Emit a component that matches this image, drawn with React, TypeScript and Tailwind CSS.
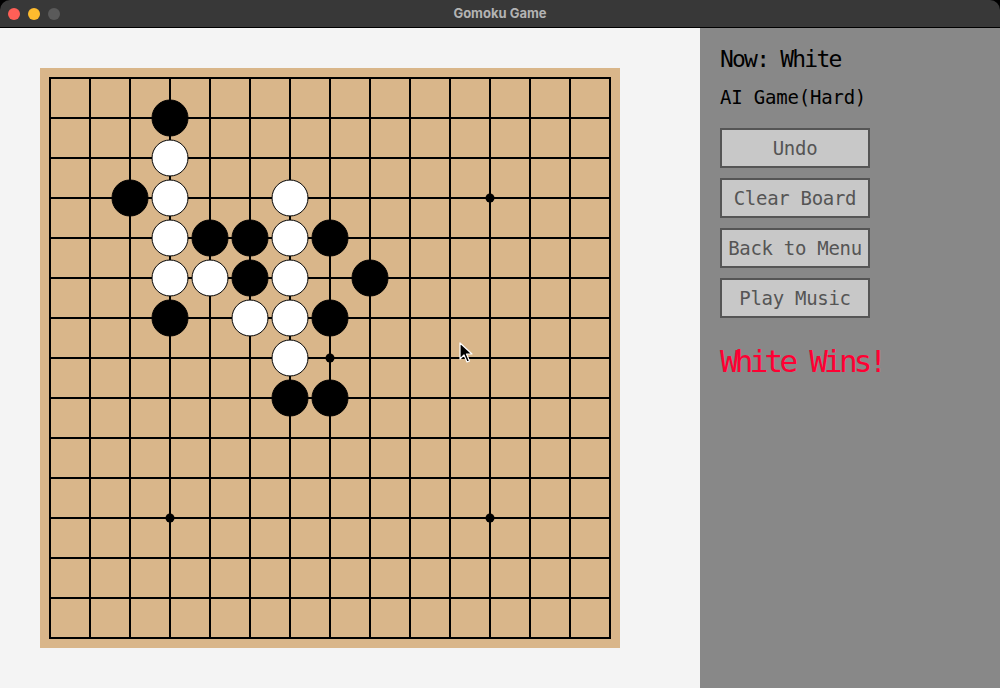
import React from "react";

// board: 15x15 intersections, 40px apart
const SIZE = 15;
const GAP = 40;
const OFF = 10;

type Stone = [number, number, "b" | "w"];

const stones: Stone[] = [
  [3, 1, "b"],
  [3, 2, "w"],
  [2, 3, "b"],
  [3, 3, "w"],
  [6, 3, "w"],
  [3, 4, "w"],
  [4, 4, "b"],
  [5, 4, "b"],
  [6, 4, "w"],
  [7, 4, "b"],
  [3, 5, "w"],
  [4, 5, "w"],
  [5, 5, "b"],
  [6, 5, "w"],
  [8, 5, "b"],
  [3, 6, "b"],
  [5, 6, "w"],
  [6, 6, "w"],
  [7, 6, "b"],
  [6, 7, "w"],
  [6, 8, "b"],
  [7, 8, "b"],
];

const starPoints = [
  [3, 3],
  [11, 3],
  [7, 7],
  [3, 11],
  [11, 11],
];

const buttons = ["Undo", "Clear Board", "Back to Menu", "Play Music"];

const mono = { fontFamily: '"DejaVu Sans Mono", "Liberation Mono", monospace' };

const Board = () => {
  const end = OFF + GAP * (SIZE - 1);
  return (
    <div className="w-[580px] h-[580px] bg-[#d9b68a]">
      <svg width="580" height="580" viewBox="0 0 580 580">
        {Array.from({ length: SIZE }).map((_, i) => (
          <g key={i}>
            <line x1={OFF + i * GAP} y1={OFF - 1} x2={OFF + i * GAP} y2={end + 1} stroke="#000" strokeWidth="2" />
            <line x1={OFF - 1} y1={OFF + i * GAP} x2={end + 1} y2={OFF + i * GAP} stroke="#000" strokeWidth="2" />
          </g>
        ))}
        {starPoints.map(([x, y]) => (
          <circle key={`s${x}-${y}`} cx={OFF + x * GAP} cy={OFF + y * GAP} r="4.5" fill="#000" />
        ))}
        {stones.map(([x, y, c]) => (
          <circle
            key={`${x}-${y}`}
            cx={OFF + x * GAP}
            cy={OFF + y * GAP}
            r="18"
            fill={c === "b" ? "#000" : "#fff"}
            stroke="#000"
            strokeWidth="1"
          />
        ))}
      </svg>
    </div>
  );
};

const App = () => {
  return (
    <div className="w-[1000px] h-[688px] bg-black overflow-hidden flex flex-col">
      {/* title bar */}
      <div className="relative h-[28px] shrink-0 bg-[#383838] border-b border-black rounded-t-[10px] flex items-center justify-center">
        <div className="absolute left-[8px] top-[8px] flex gap-[8px]">
          <div className="w-[12px] h-[12px] rounded-full bg-[#ff5f57]" />
          <div className="w-[12px] h-[12px] rounded-full bg-[#febc2e]" />
          <div className="w-[12px] h-[12px] rounded-full bg-[#5a5a5a]" />
        </div>
        <span className="text-[13px] font-bold text-[#b3b3b3]" style={{ fontFamily: 'Inter, "Liberation Sans", sans-serif' }}>
          Gomoku Game
        </span>
      </div>

      <div className="flex flex-1">
        {/* board side */}
        <div className="relative w-[700px] bg-[#f4f4f4] pt-10 pl-10">
          <Board />
          {/* mouse pointer */}
          <svg className="absolute left-[459px] top-[314px]" width="14" height="22" viewBox="0 0 14 22">
            <path d="M1 1 L1 17 L5 13 L8 20 L10.5 19 L7.5 12 L13 12 Z" fill="#000" stroke="#fff" strokeWidth="1.2" strokeLinejoin="round" />
          </svg>
        </div>

        {/* side panel */}
        <div className="flex-1 bg-[#888888] pl-5 flex flex-col" style={mono}>
          <div className="mt-[20px] text-[23px] leading-none tracking-[-1.8px] text-black">Now: White</div>
          <div className="mt-[17px] text-[19px] leading-none tracking-[-0.2px] text-black">AI Game(Hard)</div>
          <div className="mt-[21px] flex flex-col gap-[10px]">
            {buttons.map((b) => (
              <div
                key={b}
                className="w-[150px] h-[40px] border-2 border-[#555555] bg-[#c8c8c8] flex items-center justify-center text-[19px] leading-none tracking-[-0.3px] text-[#555555] whitespace-nowrap"
              >
                {b}
              </div>
            ))}
          </div>
          <div className="mt-[28px] text-[31px] leading-none tracking-[-3.8px] text-[#ff0033]">White Wins!</div>
        </div>
      </div>
    </div>
  );
};

export default App;
